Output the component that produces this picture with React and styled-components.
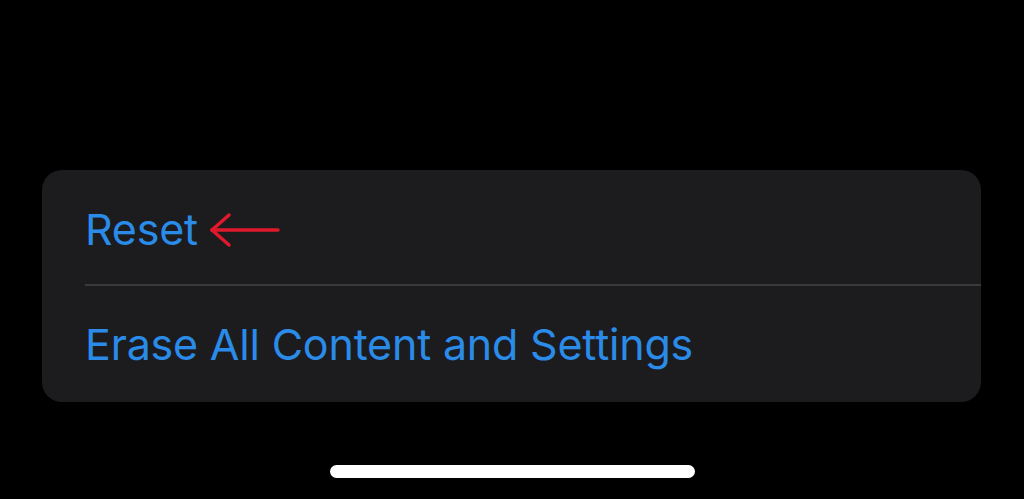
import React from 'react';
import styled, { createGlobalStyle } from 'styled-components';

const GlobalStyle = createGlobalStyle`
  html, body {
    margin: 0;
    padding: 0;
    background: #000;
  }
  body {
    font-family: Inter, "Noto Sans", "Liberation Sans", sans-serif;
    -webkit-font-smoothing: antialiased;
  }
`;

const Screen = styled.div`
  width: 1024px;
  height: 499px;
  background: #000;
  display: flex;
  flex-direction: column;
  box-sizing: border-box;
  padding: 170px 43px 0 42px;
  overflow: hidden;
`;

const Card = styled.div`
  background: #1c1c1e;
  border-radius: 20px;
  display: flex;
  flex-direction: column;
  overflow: hidden;
`;

const Row = styled.div`
  height: ${p => p.h}px;
  display: flex;
  align-items: center;
  gap: 11px;
  padding-left: 43px;
  padding-top: ${p => p.pt || 0}px;
  box-sizing: border-box;
`;

const Divider = styled.div`
  height: 1.5px;
  background: #3a3a3c;
  margin-left: 43px;
`;

const Label = styled.span`
  color: #2a8be8;
  font-size: 43px;
  font-weight: 400;
  letter-spacing: -0.2px;
`;

const HomeArea = styled.div`
  flex: 1;
  display: flex;
  justify-content: center;
  padding-top: 63px;
  padding-left: 1px;
`;

const HomeBar = styled.div`
  width: 365px;
  height: 13px;
  border-radius: 7px;
  background: #fff;
`;

function Arrow() {
  return (
    <svg width="72" height="36" viewBox="0 0 72 36" style={{ marginTop: 2 }}>
      <g stroke="#e0182c" strokeWidth="3.5" strokeLinecap="round" fill="none">
        <line x1="3" y1="18" x2="69" y2="18" />
        <line x1="3" y1="18" x2="20" y2="3" />
        <line x1="3" y1="18" x2="20" y2="33" />
      </g>
    </svg>
  );
}

export default function App() {
  return (
    <>
      <GlobalStyle />
      <Screen>
        <Card>
          <Row h={114} pt={4}>
            <Label>Reset</Label>
            <Arrow />
          </Row>
          <Divider />
          <Row h={116} pt={0}>
            <Label>Erase All Content and Settings</Label>
          </Row>
        </Card>
        <HomeArea>
          <HomeBar />
        </HomeArea>
      </Screen>
    </>
  );
}
